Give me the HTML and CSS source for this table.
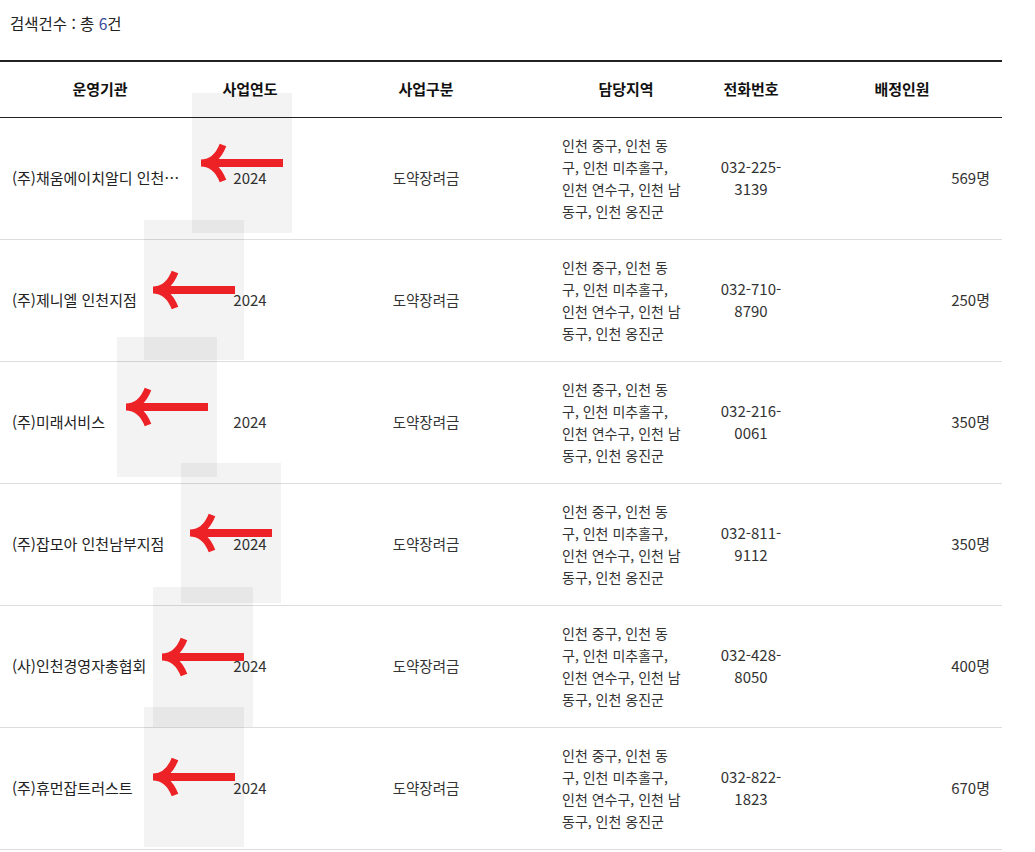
FILE: index.html
```html
<!DOCTYPE html>
<html lang="ko">
<head>
<meta charset="utf-8">
<title>검색결과</title>
<link rel="stylesheet" href="styles.css">
</head>
<body>
<div class="page">
  <p class="count">검색건수 : 총 <span class="num">6</span>건</p>
  <table class="list">
    <colgroup>
      <col class="c-org"><col class="c-year"><col class="c-type"><col class="c-area"><col class="c-tel"><col class="c-cnt">
    </colgroup>
    <thead>
      <tr><th>운영기관</th><th>사업연도</th><th>사업구분</th><th>담당지역</th><th>전화번호</th><th>배정인원</th></tr>
    </thead>
    <tbody>
      <tr>
        <td class="org">(주)채움에이치알디 인천지점</td><td class="year">2024</td><td class="type">도약장려금</td>
        <td class="area">인천 중구, 인천 동<br>구, 인천 미추홀구,<br>인천 연수구, 인천 남<br>동구, 인천 옹진군</td>
        <td class="tel">032-225-<br>3139</td><td class="cnt">569명</td>
      </tr>
      <tr>
        <td class="org">(주)제니엘 인천지점</td><td class="year">2024</td><td class="type">도약장려금</td>
        <td class="area">인천 중구, 인천 동<br>구, 인천 미추홀구,<br>인천 연수구, 인천 남<br>동구, 인천 옹진군</td>
        <td class="tel">032-710-<br>8790</td><td class="cnt">250명</td>
      </tr>
      <tr>
        <td class="org">(주)미래서비스</td><td class="year">2024</td><td class="type">도약장려금</td>
        <td class="area">인천 중구, 인천 동<br>구, 인천 미추홀구,<br>인천 연수구, 인천 남<br>동구, 인천 옹진군</td>
        <td class="tel">032-216-<br>0061</td><td class="cnt">350명</td>
      </tr>
      <tr>
        <td class="org">(주)잡모아 인천남부지점</td><td class="year">2024</td><td class="type">도약장려금</td>
        <td class="area">인천 중구, 인천 동<br>구, 인천 미추홀구,<br>인천 연수구, 인천 남<br>동구, 인천 옹진군</td>
        <td class="tel">032-811-<br>9112</td><td class="cnt">350명</td>
      </tr>
      <tr>
        <td class="org">(사)인천경영자총협회</td><td class="year">2024</td><td class="type">도약장려금</td>
        <td class="area">인천 중구, 인천 동<br>구, 인천 미추홀구,<br>인천 연수구, 인천 남<br>동구, 인천 옹진군</td>
        <td class="tel">032-428-<br>8050</td><td class="cnt">400명</td>
      </tr>
      <tr>
        <td class="org">(주)휴먼잡트러스트</td><td class="year">2024</td><td class="type">도약장려금</td>
        <td class="area">인천 중구, 인천 동<br>구, 인천 미추홀구,<br>인천 연수구, 인천 남<br>동구, 인천 옹진군</td>
        <td class="tel">032-822-<br>1823</td><td class="cnt">670명</td>
      </tr>
    </tbody>
  </table>

  <div class="mark m1"><svg viewBox="0 0 100 140" width="100" height="140"><path class="shaft" d="M12 70 H91"/><path class="head" d="M31 52 Q24 70 9 70 Q24 70 31 88"/></svg></div>
  <div class="mark m2"><svg viewBox="0 0 100 140" width="100" height="140"><path class="shaft" d="M12 70 H91"/><path class="head" d="M31 52 Q24 70 9 70 Q24 70 31 88"/></svg></div>
  <div class="mark m3"><svg viewBox="0 0 100 140" width="100" height="140"><path class="shaft" d="M12 70 H91"/><path class="head" d="M31 52 Q24 70 9 70 Q24 70 31 88"/></svg></div>
  <div class="mark m4"><svg viewBox="0 0 100 140" width="100" height="140"><path class="shaft" d="M12 70 H91"/><path class="head" d="M31 52 Q24 70 9 70 Q24 70 31 88"/></svg></div>
  <div class="mark m5"><svg viewBox="0 0 100 140" width="100" height="140"><path class="shaft" d="M12 70 H91"/><path class="head" d="M31 52 Q24 70 9 70 Q24 70 31 88"/></svg></div>
  <div class="mark m6"><svg viewBox="0 0 100 140" width="100" height="140"><path class="shaft" d="M12 70 H91"/><path class="head" d="M31 52 Q24 70 9 70 Q24 70 31 88"/></svg></div>
</div>
</body>
</html>
```

FILE: styles.css
```css
* { box-sizing: border-box; }
html, body { margin: 0; padding: 0; background: #fff; }
body {
  font-family: "Noto Sans CJK KR", "Noto Sans", sans-serif;
  color: #333;
  font-size: 13px;
}
.page { position: relative; width: 1035px; min-height: 852px; }

.count {
  margin: 0;
  padding: 13px 0 0 10px;
  font-size: 15.5px;
  line-height: 20px;
  color: #222;
}
.count .num { color: #34499a; }

.list {
  margin-top: 27px;
  width: 1002px;
  border-collapse: collapse;
  table-layout: fixed;
}
.c-org { width: 200px; }
.c-year { width: 100px; }
.c-type { width: 252px; }
.c-area { width: 148px; }
.c-tel { width: 102px; }
.c-cnt { width: 200px; }

.list th {
  border-top: 2px solid #222;
  border-bottom: 1px solid #222;
  padding: 17px 0 18px;
  font-size: 15px;
  line-height: 20px;
  font-weight: bold;
  color: #111;
  text-align: center;
}
.list td {
  border-bottom: 1px solid #ddd;
  padding: 16px 10px 17px;
  line-height: 22px;
  vertical-align: middle;
  text-align: center;
  color: #333;
}
.list td.org {
  text-align: left;
  padding-left: 12px;
  padding-right: 16px;
  font-size: 15px;
  color: #222;
  white-space: nowrap;
  overflow: hidden;
  text-overflow: ellipsis;
}
.list td.year { font-size: 15px; }
.list td.type { font-size: 14.5px; }
.list td.area { text-align: left; font-size: 14px; white-space: nowrap; padding-right: 0; }
.list td.tel { font-size: 15px; }
.list td.cnt { text-align: right; padding-right: 12px; font-size: 15px; }

.mark {
  position: absolute;
  width: 100px;
  height: 140px;
  background: rgba(0, 0, 0, 0.047);
}
.mark svg { display: block; }
.mark .shaft { stroke: #ed2226; stroke-width: 8; fill: none; }
.mark .head { stroke: #ed2226; stroke-width: 7; fill: none; stroke-linejoin: miter; }
.m1 { left: 192px; top: 93px; }
.m2 { left: 144px; top: 220px; }
.m3 { left: 117px; top: 337px; }
.m4 { left: 181px; top: 463px; }
.m5 { left: 153px; top: 587px; }
.m6 { left: 144px; top: 707px; }
```
